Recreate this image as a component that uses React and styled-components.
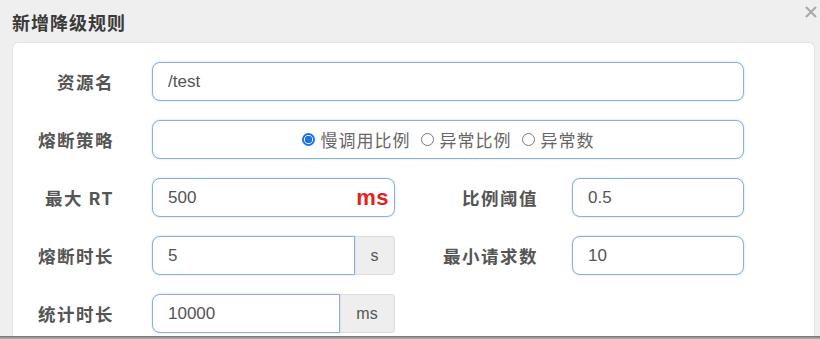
import React from "react";
import styled, { createGlobalStyle } from "styled-components";

const GlobalStyle = createGlobalStyle`
	html, body {
		margin: 0;
		padding: 0;
		background: #efefef;
	}
	body {
		font-family: "Liberation Sans", "Noto Sans CJK SC", sans-serif;
		overflow: hidden;
	}
`;

const Modal = styled.div`
	width: 820px;
	height: 339px;
	display: flex;
	flex-direction: column;
	background: #efefef;
	overflow: hidden;
`;

const Header = styled.div`
	height: 42px;
	flex: none;
	display: flex;
	justify-content: space-between;
	align-items: flex-start;
	padding: 0 2px 0 12px;
	box-sizing: border-box;
`;

const Title = styled.h4`
	margin: 10px 0 0;
	font-family: "Noto Sans CJK SC", sans-serif;
	font-size: 18px;
	font-weight: 700;
	color: #3a3a3a;
	letter-spacing: 1px;
	line-height: 24px;
`;

const Close = styled.span`
	margin-top: 5px;
	width: 14px;
	height: 14px;
	display: flex;
	svg {
		display: block;
	}
`;

const Card = styled.div`
	flex: 1;
	margin: 0 5px 0 12px;
	background: #fff;
	border: 1px solid #e3e3e3;
	border-bottom: none;
	border-radius: 6px 6px 0 0;
	padding-top: 19px;
	display: flex;
	flex-direction: column;
	gap: 19px;
	box-sizing: border-box;
`;

const Row = styled.div`
	display: grid;
	grid-template-columns: 101px 592px;
	column-gap: 38px;
	align-items: center;
	height: 39px;
`;

const Label = styled.label`
	text-align: right;
	font-family: "Noto Sans CJK SC", sans-serif;
	font-size: 17.5px;
	font-weight: 700;
	color: #555;
	letter-spacing: 1.5px;
	white-space: nowrap;
`;

const Split = styled.div`
	display: grid;
	grid-template-columns: 243px 177px 172px;
	align-items: center;
	height: 39px;

	& > label {
		padding-right: 34px;
	}
`;

const Field = styled.div`
	position: relative;
	display: flex;
	align-items: center;
	height: 39px;
	box-sizing: border-box;
	border: 1.5px solid #8db0d8;
	border-radius: ${(p) => (p.$addon ? "8px 0 0 8px" : "8px")};
	box-shadow: 0 0 2px rgba(102, 155, 220, 0.45);
	padding: 0 15px;
	font-size: 17px;
	color: #555;
	background: #fff;
	flex: ${(p) => (p.$addon ? "1" : "none")};
	justify-content: ${(p) => (p.$center ? "center" : "space-between")};
`;

const Unit = styled.span`
	color: #e2231a;
	font-weight: 700;
	font-size: 22px;
	margin-right: -10px;
	letter-spacing: 0.5px;
`;

const Group = styled.div`
	display: flex;
	height: 39px;
`;

const Addon = styled.span`
	width: ${(p) => p.$w}px;
	flex: none;
	display: flex;
	align-items: center;
	justify-content: center;
	background: #eee;
	border: 1px solid #ddd;
	border-left: none;
	border-radius: 0 4px 4px 0;
	box-sizing: border-box;
	font-size: 16px;
	color: #555;
`;

const Radios = styled.div`
	display: flex;
	align-items: center;
	gap: 10px;
`;

const RadioItem = styled.span`
	display: flex;
	align-items: center;
	gap: 6px;
	font-family: "Noto Sans CJK SC", sans-serif;
	font-size: 17px;
	color: #666;
	letter-spacing: 1px;
`;

const Dot = styled.span`
	width: 13px;
	height: 13px;
	border-radius: 50%;
	box-sizing: border-box;
	border: ${(p) => (p.$on ? "2px solid #1a73e8" : "1.5px solid #7a7a7a")};
	background: ${(p) => (p.$on ? "radial-gradient(circle, #1a73e8 0 3.5px, #fff 4px)" : "#fff")};
`;

const BottomEdge = styled.div`
	height: 3px;
	flex: none;
	background: linear-gradient(#6e6e6e, #b9b9b9);
`;

const radios = [
	{ text: "慢调用比例", on: true },
	{ text: "异常比例", on: false },
	{ text: "异常数", on: false },
];

export default function App() {
	return (
		<>
			<GlobalStyle />
			<Modal>
				<Header>
					<Title>新增降级规则</Title>
					<Close>
						<svg width="14" height="14" viewBox="0 0 14 14">
							<path d="M2 2 L12 12 M12 2 L2 12" stroke="#a8a8a8" strokeWidth="2" />
						</svg>
					</Close>
				</Header>
				<Card>
					<Row>
						<Label>资源名</Label>
						<Field>/test</Field>
					</Row>
					<Row>
						<Label>熔断策略</Label>
						<Field $center>
							<Radios>
								{radios.map((r) => (
									<RadioItem key={r.text}>
										<Dot $on={r.on} />
										{r.text}
									</RadioItem>
								))}
							</Radios>
						</Field>
					</Row>
					<Row>
						<Label>最大 RT</Label>
						<Split>
							<Field>
								500
								<Unit>ms</Unit>
							</Field>
							<Label>比例阈值</Label>
							<Field>0.5</Field>
						</Split>
					</Row>
					<Row>
						<Label>熔断时长</Label>
						<Split>
							<Group>
								<Field $addon>5</Field>
								<Addon $w={40}>s</Addon>
							</Group>
							<Label>最小请求数</Label>
							<Field>10</Field>
						</Split>
					</Row>
					<Row>
						<Label>统计时长</Label>
						<Split>
							<Group>
								<Field $addon>10000</Field>
								<Addon $w={55}>ms</Addon>
							</Group>
						</Split>
					</Row>
				</Card>
				<BottomEdge />
			</Modal>
		</>
	);
}
